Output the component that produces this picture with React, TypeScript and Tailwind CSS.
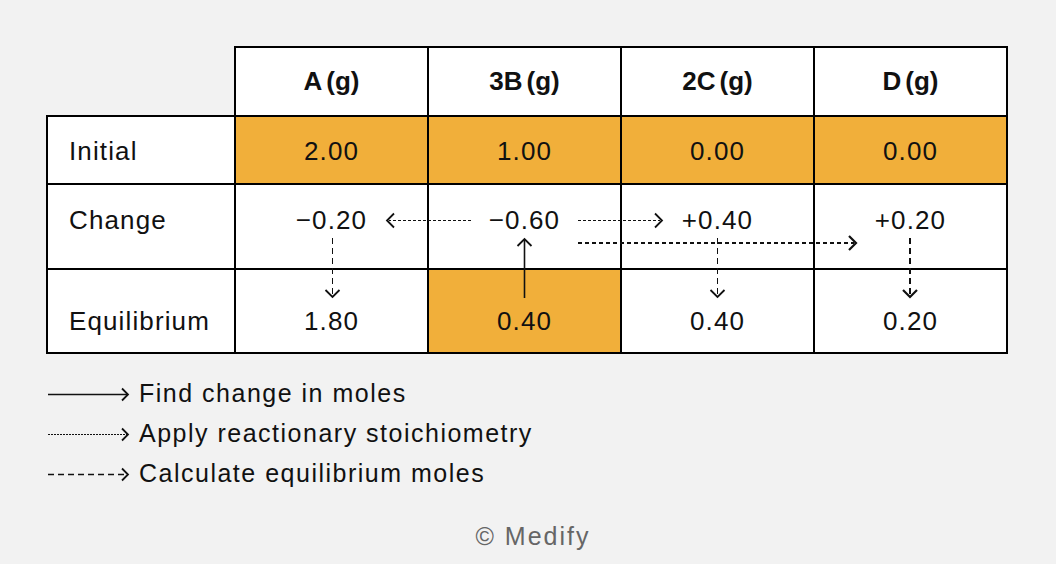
import React from 'react';

const headers = ['A', '3B', '2C', 'D'];

function Chevron({ x, y, dir, w = 1.8 }: { x: number; y: number; dir: 'l' | 'r' | 'u' | 'd'; w?: number }) {
  const s = 7;
  let d = '';
  if (dir === 'r') d = `M${x - s} ${y - s} L${x} ${y} L${x - s} ${y + s}`;
  if (dir === 'l') d = `M${x + s} ${y - s} L${x} ${y} L${x + s} ${y + s}`;
  if (dir === 'u') d = `M${x - s} ${y + s} L${x} ${y} L${x + s} ${y + s}`;
  if (dir === 'd') d = `M${x - s} ${y - s} L${x} ${y} L${x + s} ${y - s}`;
  return <path d={d} fill="none" stroke="#111" strokeWidth={w} />;
}

function Arrows() {
  return (
    <svg className="pointer-events-none absolute left-0 top-0" width={1056} height={564}>
      {/* fine dotted: stoichiometry */}
      <line x1={471} y1={220.5} x2={389} y2={220.5} stroke="#111" strokeWidth={1} strokeDasharray="3 2" />
      <Chevron x={387} y={220.5} dir="l" />
      <line x1={578} y1={220.5} x2={660} y2={220.5} stroke="#111" strokeWidth={1} strokeDasharray="3 2" />
      <Chevron x={662} y={220.5} dir="r" />
      <line x1={578} y1={243} x2={854} y2={243} stroke="#111" strokeWidth={2} strokeDasharray="4 3" />
      <Chevron x={856} y={243} dir="r" w={2.2} />
      {/* solid: change in moles */}
      <line x1={524.5} y1={298} x2={524.5} y2={240} stroke="#111" strokeWidth={1.6} />
      <Chevron x={524.5} y={239} dir="u" />
      {/* dashed: equilibrium moles */}
      <line x1={332.5} y1={238} x2={332.5} y2={295} stroke="#111" strokeWidth={1} strokeDasharray="6 4" />
      <Chevron x={332.5} y={297} dir="d" />
      <line x1={717.5} y1={238} x2={717.5} y2={295} stroke="#111" strokeWidth={1} strokeDasharray="6 4" />
      <Chevron x={717.5} y={297} dir="d" />
      <line x1={910} y1={238} x2={910} y2={295} stroke="#111" strokeWidth={2} strokeDasharray="6 4" />
      <Chevron x={910} y={297} dir="d" w={2.2} />
    </svg>
  );
}

function LegendArrow({ dash, w }: { dash?: string; w: number }) {
  return (
    <svg width={84} height={20} className="shrink-0">
      <line x1={1} y1={10.5} x2={80} y2={10.5} stroke="#111" strokeWidth={w} strokeDasharray={dash} />
      <path d="M75 4.5 L81 10.5 L75 16.5" fill="none" stroke="#111" strokeWidth={1.8} />
    </svg>
  );
}

export default function App() {
  const cell = 'flex items-center justify-center bg-white';
  const orange = 'flex items-center justify-center bg-[#f1af3a] pt-[3px]';
  return (
    <div
      className="relative h-[564px] w-[1056px] overflow-hidden bg-[#f2f2f2] tracking-[0.07em] text-[#111]"
      style={{ fontFamily: '"Liberation Sans", Arial, sans-serif' }}
    >
      <div className="pl-[46px] pt-[46px]">
        <div className="grid w-fit grid-cols-[186px_191px_191px_191px_191px] grid-rows-[67px_66px_83px_82px] gap-[2px] bg-black p-[2px] text-[26px]">
          <div className="-ml-[2px] -mt-[2px] bg-[#f2f2f2]" />
          {headers.map((h) => (
            <div key={h} className={`${cell} gap-[4px] text-[26px] font-bold tracking-normal`}>
              <span>{h}</span>
              <span>(g)</span>
            </div>
          ))}

          <div className="flex items-center bg-white pl-[21px] pt-[3px]">Initial</div>
          <div className={orange}>2.00</div>
          <div className={orange}>1.00</div>
          <div className={orange}>0.00</div>
          <div className={orange}>0.00</div>

          <div className="flex items-start bg-white pl-[21px] pt-[16px]">Change</div>
          <div className="flex items-start justify-center bg-white pt-[16px]">−0.20</div>
          <div className="flex items-start justify-center bg-white pt-[16px]">−0.60</div>
          <div className="flex items-start justify-center bg-white pt-[16px]">+0.40</div>
          <div className="flex items-start justify-center bg-white pt-[16px]">+0.20</div>

          <div className="flex items-start bg-white pl-[21px] pt-[32px]">Equilibrium</div>
          <div className="flex items-start justify-center bg-white pt-[32px]">1.80</div>
          <div className="flex items-start justify-center bg-[#f1af3a] pt-[32px]">0.40</div>
          <div className="flex items-start justify-center bg-white pt-[32px]">0.40</div>
          <div className="flex items-start justify-center bg-white pt-[32px]">0.20</div>
        </div>
      </div>

      <div className="mt-[20px] flex flex-col pl-[47px] text-[25px] tracking-[0.06em]">
        <div className="flex h-[40px] items-center gap-[8px]">
          <LegendArrow w={1.6} />
          <span>Find change in moles</span>
        </div>
        <div className="flex h-[40px] items-center gap-[8px]">
          <LegendArrow w={1} dash="2 1" />
          <span>Apply reactionary stoichiometry</span>
        </div>
        <div className="flex h-[40px] items-center gap-[8px]">
          <LegendArrow w={1.6} dash="6 4" />
          <span>Calculate equilibrium moles</span>
        </div>
      </div>

      <div className="mt-[24px] flex justify-center pl-[10px] text-[25px] tracking-[0.08em] text-[#666]">© Medify</div>
      <Arrows />
    </div>
  );
}
